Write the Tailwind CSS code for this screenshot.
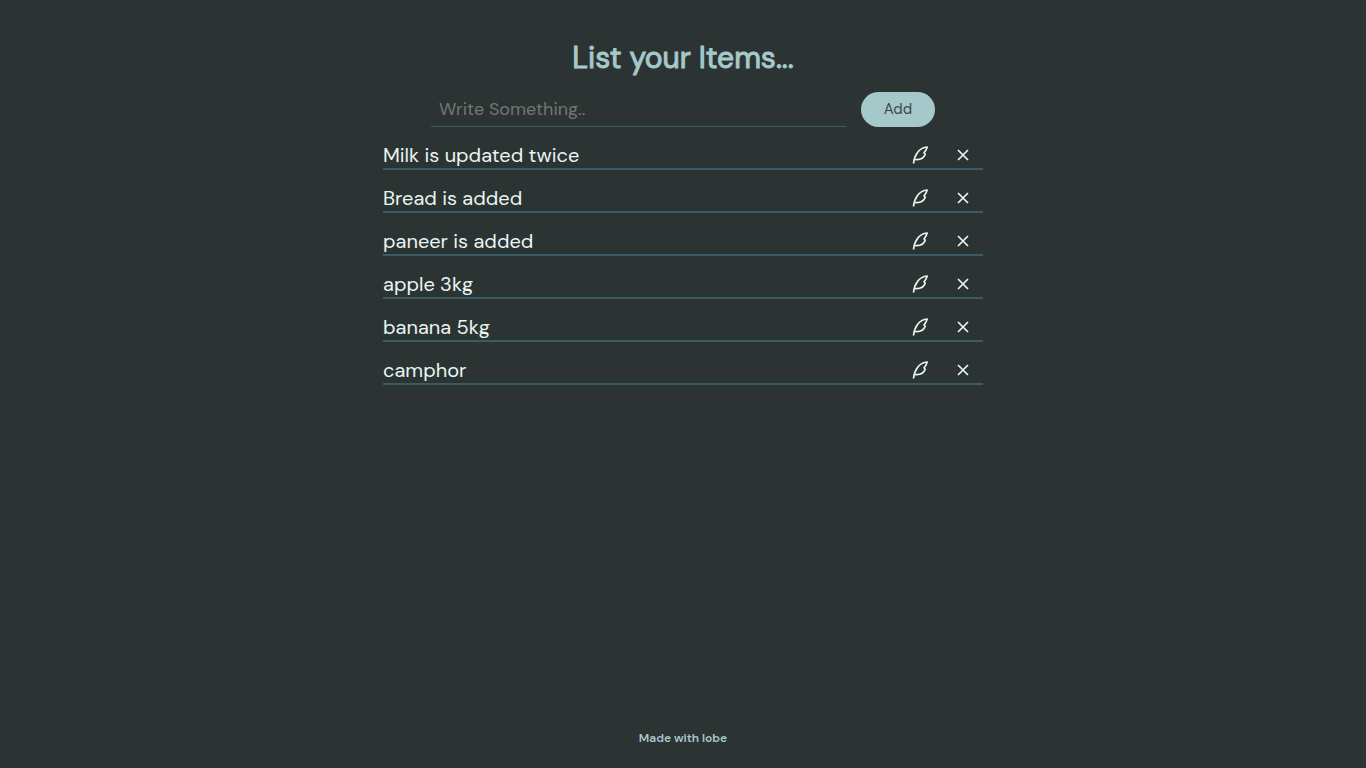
<!DOCTYPE html>
<html lang="en">
<head>
<meta charset="utf-8">
<meta name="viewport" content="width=device-width, initial-scale=1">
<title>List your Items</title>
<script src="https://cdn.jsdelivr.net/npm/@tailwindcss/browser@4"></script>
</head>
<body class="flex min-h-screen flex-col items-center bg-[#2c3333] px-4 font-['DM_Sans',Inter,sans-serif] text-[#e7f6f2]">
<svg class="hidden" aria-hidden="true">
  <symbol id="quill" viewBox="0 0 18 20"><path d="M2.500 18.500C3 14 4.200 10.500 6.500 7.500C8.800 4.300 12 2.300 16.200 2C15.400 4.300 15 6 13 7.800L14.200 9.300C12.800 13.300 9 14.900 4.200 14.500" fill="none" stroke="currentColor" stroke-width="1.700" stroke-linejoin="round"/></symbol>
  <symbol id="cross" viewBox="0 0 12 12"><path d="M1 1L11 11M11 1L1 11" fill="none" stroke="currentColor" stroke-width="1.700"/></symbol>
</svg>
<main class="flex w-full max-w-[600px] flex-1 flex-col items-center pt-9">
  <h1 class="text-[30px] leading-[44px] font-normal text-[#a5c9ca] [-webkit-text-stroke:1px_#a5c9ca]">List your Items...</h1>
  <form class="mt-3 flex w-full max-w-[504px] gap-[15px]">
    <input type="text" aria-label="New item" placeholder="Write Something.." class="h-[35px] min-w-0 flex-1 border-b border-[#395b64] px-2 text-[18px] outline-none placeholder:text-[#757575]">
    <button type="button" class="h-[35px] w-[74px] rounded-full bg-[#a5c9ca] text-[15px] text-[#3a4750]">Add</button>
  </form>
  <ul class="w-full text-[20px] leading-[26px]">
    <li class="flex h-[43px] items-end border-b-2 border-[#395b64]"><span class="flex-1">Milk is updated twice</span><button type="button" aria-label="Edit" class="mr-7 mb-[3px]"><svg class="h-5 w-[18px]"><use href="#quill"/></svg></button><button type="button" aria-label="Delete" class="mr-3.5 mb-[7px]"><svg class="size-3"><use href="#cross"/></svg></button></li>
    <li class="flex h-[43px] items-end border-b-2 border-[#395b64]"><span class="flex-1">Bread is added</span><button type="button" aria-label="Edit" class="mr-7 mb-[3px]"><svg class="h-5 w-[18px]"><use href="#quill"/></svg></button><button type="button" aria-label="Delete" class="mr-3.5 mb-[7px]"><svg class="size-3"><use href="#cross"/></svg></button></li>
    <li class="flex h-[43px] items-end border-b-2 border-[#395b64]"><span class="flex-1">paneer is added</span><button type="button" aria-label="Edit" class="mr-7 mb-[3px]"><svg class="h-5 w-[18px]"><use href="#quill"/></svg></button><button type="button" aria-label="Delete" class="mr-3.5 mb-[7px]"><svg class="size-3"><use href="#cross"/></svg></button></li>
    <li class="flex h-[43px] items-end border-b-2 border-[#395b64]"><span class="flex-1">apple 3kg</span><button type="button" aria-label="Edit" class="mr-7 mb-[3px]"><svg class="h-5 w-[18px]"><use href="#quill"/></svg></button><button type="button" aria-label="Delete" class="mr-3.5 mb-[7px]"><svg class="size-3"><use href="#cross"/></svg></button></li>
    <li class="flex h-[43px] items-end border-b-2 border-[#395b64]"><span class="flex-1">banana 5kg</span><button type="button" aria-label="Edit" class="mr-7 mb-[3px]"><svg class="h-5 w-[18px]"><use href="#quill"/></svg></button><button type="button" aria-label="Delete" class="mr-3.5 mb-[7px]"><svg class="size-3"><use href="#cross"/></svg></button></li>
    <li class="flex h-[43px] items-end border-b-2 border-[#395b64]"><span class="flex-1">camphor</span><button type="button" aria-label="Edit" class="mr-7 mb-[3px]"><svg class="h-5 w-[18px]"><use href="#quill"/></svg></button><button type="button" aria-label="Delete" class="mr-3.5 mb-[7px]"><svg class="size-3"><use href="#cross"/></svg></button></li>
  </ul>
</main>
<footer class="pb-5 text-[12px] leading-5 font-semibold text-[#a5c9ca]">Made with lobe</footer>
</body>
</html>
